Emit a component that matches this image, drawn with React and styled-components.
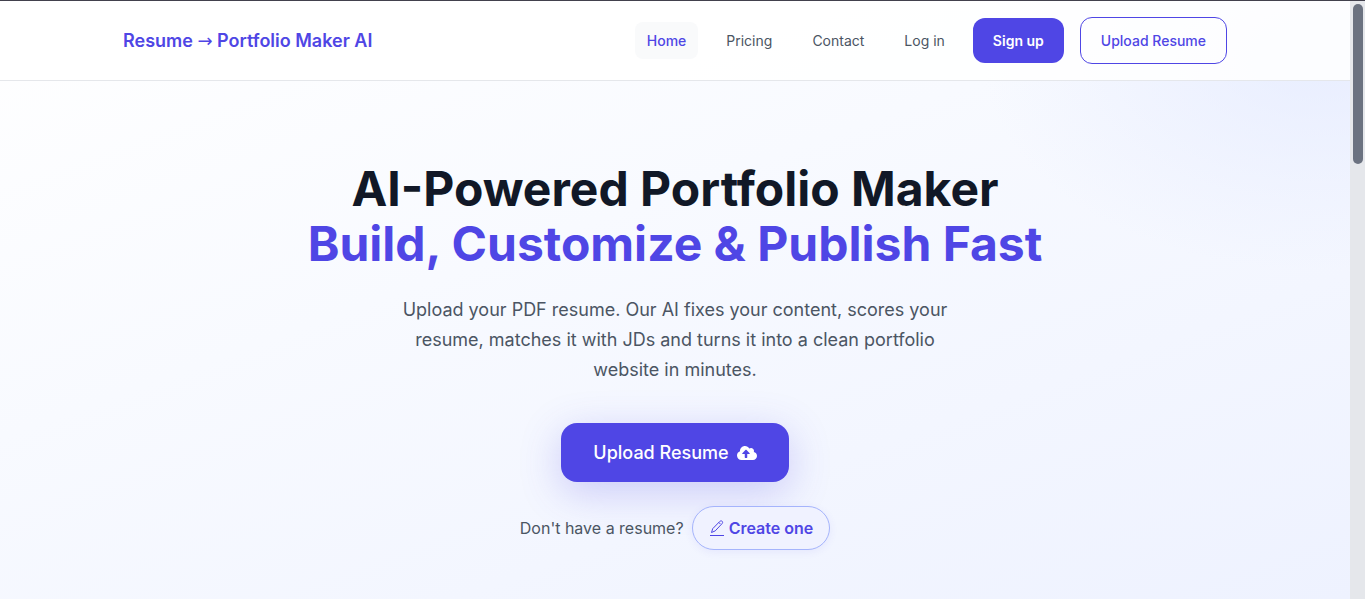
import styled, { createGlobalStyle } from "styled-components";
import { FaCloudUploadAlt } from "react-icons/fa";

const GlobalStyle = createGlobalStyle`
  * {
    box-sizing: border-box;
  }
  body {
    margin: 0;
    font-family: Inter, "Liberation Sans", sans-serif;
    line-height: 1.5;
    color: #4b5563;
  }
`;

const Page = styled.div`
  display: flex;
  height: 100vh;
  border-top: 1px solid #42414d;
`;

const Content = styled.div`
  flex: 1;
  overflow: hidden;
  background:
    radial-gradient(ellipse 340px 210px at 98% 60px, rgba(224, 231, 255, 0.6), rgba(224, 231, 255, 0)),
    linear-gradient(160deg, #ffffff 0%, #f8faff 40%, #eef2ff 100%);
`;

const Header = styled.header`
  border-bottom: 1px solid #e5e7eb;
  background-color: rgba(255, 255, 255, 0.85);
`;

const HeaderInner = styled.div`
  max-width: 1152px;
  margin: 0 auto;
  padding: 16px 24px;
  display: flex;
  align-items: center;
  justify-content: space-between;
`;

const Brand = styled.a`
  font-size: 18px;
  font-weight: 600;
  color: #4f46e5;
  text-decoration: none;
`;

const Arrow = styled.span`
  font-family: "DejaVu Sans", sans-serif;
  font-weight: 400;
  line-height: 1;
`;

const Nav = styled.nav`
  display: flex;
  align-items: center;
  gap: 16px;
  font-size: 14px;
`;

const NavLink = styled.a`
  padding: 8px 12px;
  border-radius: 8px;
  text-decoration: none;
  color: ${props => (props.$active ? "#4f46e5" : "#4b5563")};
  background-color: ${props => (props.$active ? "#f9fafb" : "transparent")};
  font-weight: ${props => (props.$active ? 500 : 400)};
`;

const NavButton = styled.button`
  padding: 12px 20px;
  border: ${props => (props.$outline ? "1px solid #4f46e5" : "none")};
  border-radius: 12px;
  background-color: ${props => (props.$outline ? "transparent" : "#4f46e5")};
  color: ${props => (props.$outline ? "#4f46e5" : "#ffffff")};
  font: inherit;
  font-weight: ${props => (props.$outline ? 500 : 600)};
  cursor: pointer;
`;

const Hero = styled.main`
  display: flex;
  flex-direction: column;
  align-items: center;
  padding: 80px 24px;
  text-align: center;
`;

const Title = styled.h1`
  margin: 0;
  font-size: 48px;
  font-weight: 700;
  line-height: 55px;
  color: #111827;
`;

const Highlight = styled.span`
  display: block;
  color: #4f46e5;
`;

const Lead = styled.p`
  max-width: 576px;
  margin: 24px 0 38px;
  font-size: 18px;
  line-height: 30px;
`;

const UploadButton = styled.button`
  display: flex;
  align-items: center;
  gap: 8px;
  padding: 16px 32px;
  border: none;
  border-radius: 16px;
  background-color: #4f46e5;
  box-shadow: 0 10px 40px rgba(79, 70, 229, 0.25);
  color: #ffffff;
  font: inherit;
  font-size: 18px;
  font-weight: 500;
  cursor: pointer;
`;

const CreateRow = styled.div`
  display: flex;
  align-items: center;
  gap: 8px;
  margin-top: 24px;
`;

const CreateLink = styled.a`
  display: flex;
  align-items: center;
  gap: 4px;
  padding: 9px 16px;
  border: 1px solid #a5b4fc;
  border-radius: 999px;
  background-color: #f0f2ff;
  box-shadow: 0 2px 8px rgba(79, 70, 229, 0.08);
  color: #4f46e5;
  font-weight: 600;
  text-decoration: none;
`;

const ScrollTrack = styled.div`
  width: 15px;
  padding: 3px 2px 0 3px;
  background-color: #e5e7eb;
`;

const ScrollThumb = styled.div`
  height: 160px;
  border-radius: 5px;
  background-color: #6b7280;
`;

const PenIcon = () => (
  <svg width="16" height="18" viewBox="0 0 16 18" fill="none" stroke="currentColor" strokeLinejoin="round" aria-hidden="true">
    <path d="M2.500 13.500L3.700 9.700L10.700 2.500C11.500 1.700 12.600 1.700 13.200 2.300C13.800 2.900 13.800 3.900 13 4.700L6.200 11.900L2.500 13.500ZM10 3.500L11.300 5" />
    <path d="M1 16.500H15" />
  </svg>
);

const App = () => {
  return (
    <>
      <GlobalStyle />
      <Page>
        <Content>
          <Header>
            <HeaderInner>
              <Brand href="#">
                Resume <Arrow>→</Arrow> Portfolio Maker AI
              </Brand>
              <Nav>
                <NavLink href="#" $active>Home</NavLink>
                <NavLink href="#pricing">Pricing</NavLink>
                <NavLink href="#contact">Contact</NavLink>
                <NavLink href="#login">Log in</NavLink>
                <NavButton type="button">Sign up</NavButton>
                <NavButton type="button" $outline>Upload Resume</NavButton>
              </Nav>
            </HeaderInner>
          </Header>
          <Hero>
            <Title>
              AI-Powered Portfolio Maker
              <Highlight>Build, Customize &amp; Publish Fast</Highlight>
            </Title>
            <Lead>
              Upload your PDF resume. Our AI fixes your content, scores your
              resume, matches it with JDs and turns it into a clean portfolio
              website in minutes.
            </Lead>
            <UploadButton type="button">
              Upload Resume
              <FaCloudUploadAlt size={20} />
            </UploadButton>
            <CreateRow>
              <span>Don't have a resume?</span>
              <CreateLink href="#create">
                <PenIcon />
                Create one
              </CreateLink>
            </CreateRow>
          </Hero>
        </Content>
        <ScrollTrack>
          <ScrollThumb />
        </ScrollTrack>
      </Page>
    </>
  );
};

export default App;
